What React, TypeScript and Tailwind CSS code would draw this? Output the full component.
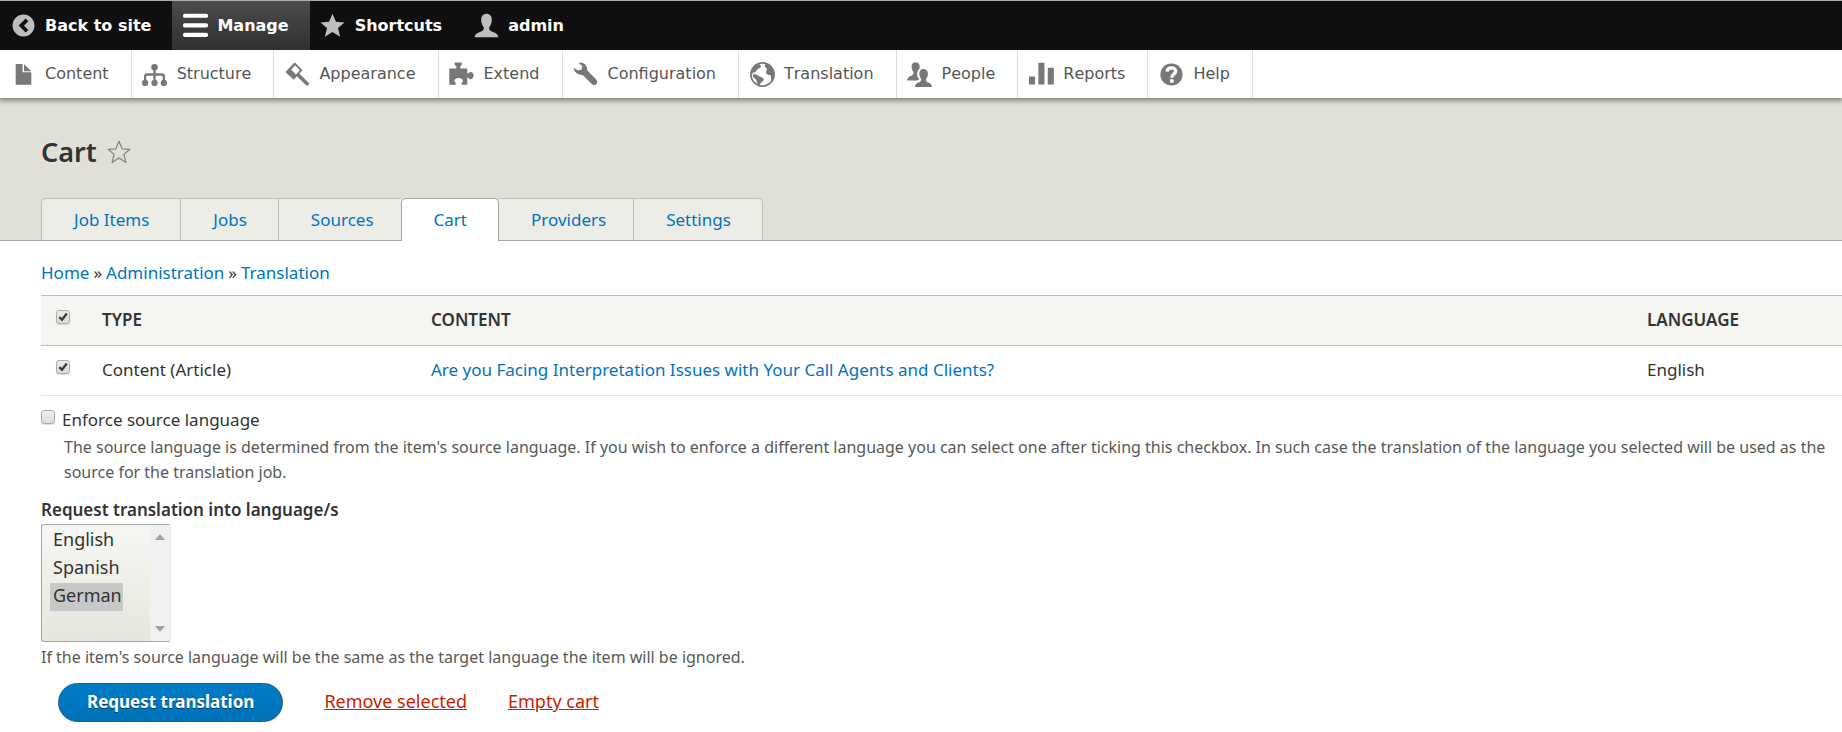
import { useEffect, useRef, useState } from "react";
import type { ReactNode } from "react";
import { clsx } from "clsx";

function Icon({ children, className }: { children: ReactNode; className?: string }) {
  return (
    <span className="flex w-[26px] shrink-0 justify-center">
      <svg viewBox="0 0 16 16" width="25" height="25" fill="currentColor" className={className} aria-hidden="true">
        {children}
      </svg>
    </span>
  );
}

const STAR = "M8 .8 10.1 5.9 15.3 6.2 11.3 9.6 12.6 15 8 12 3.4 15 4.7 9.6.7 6.2 5.9 5.9z";

const BAR = [
  {
    label: "Back to site",
    icon: <path fillRule="evenodd" d="M8 1a7 7 0 1 0 0 14A7 7 0 0 0 8 1zm1.400 2.500 1.700 1.700L8.300 8l2.800 2.800-1.700 1.700L4.900 8z" />,
  },
  {
    label: "Manage",
    active: true,
    icon: (
      <>
        <rect y="0.4" width="16" height="2.7" rx="1.1" />
        <rect y="6.5" width="16" height="2.7" rx="1.1" />
        <rect y="12.6" width="16" height="2.7" rx="1.1" />
      </>
    ),
  },
  {
    label: "Shortcuts",
    icon: <path d="M8 .4 10.200 5.600 15.700 6 11.500 9.600 12.900 15.200 8 12.200 3.100 15.200 4.500 9.600.3 6 5.800 5.600z" />,
  },
  {
    label: "admin",
    icon: (
      <path d="M8 .5C6 .5 4.600 2 4.600 4.300c0 2 .7 3.400 1.500 4.600.5 1 .1 2-.9 2.600C3.500 12.400.7 12.600.500 15.500h15c-.2-2.900-3-3.100-4.700-4-1-.6-1.400-1.600-.9-2.600.8-1.200 1.500-2.600 1.500-4.600C11.400 2 10 .5 8 .5z" />
    ),
  },
];

const TRAY = [
  { label: "Content", icon: <path d="M3 1.300h4.400v5.300H13v8H3zM8.300 1.300 13 5.900H8.300z" /> },
  {
    label: "Structure",
    icon: (
      <>
        <circle cx="8" cy="3.300" r="2.100" />
        <path d="M8 4v9M2 13.500V9.400Q2 8 3.400 8h9.200Q14 8 14 9.400v4.100" fill="none" stroke="currentColor" strokeWidth="1.500" />
        <circle cx="2" cy="13.400" r="2" />
        <circle cx="8" cy="13.400" r="2" />
        <circle cx="14" cy="13.400" r="2" />
      </>
    ),
  },
  {
    label: "Appearance",
    icon: (
      <>
        <path fillRule="evenodd" d="M6.200.200 11.200 5.200 5.600 11.400.300 6.400zM6.400 2.100 4 4.900 7 8 9.500 5.200z" />
        <path d="M8.700 8.600 14.200 13.900" stroke="currentColor" strokeWidth="2.300" strokeLinecap="round" />
      </>
    ),
  },
  {
    label: "Extend",
    icon: (
      <path d="M3.600.300h4.600v1.400l-1 1v1.400h4.500v3.400l1.100-.7c1.500-1 3 .2 3 1.900s-1.500 2.900-3 1.900l-1.100-.8v4.700H8.100v-1.300l.9-.9c0-1.300-1-2.100-2.800-2.100s-2.900.8-2.900 2.100l1 .9v1.300H.200V4.100h4.500V2.700L3.600 1.700z" />
    ),
  },
  {
    label: "Configuration",
    icon: (
      <path d="M3.500.600C5.900-.1 8.400 1.200 8.900 3.600c.2.900.2 1.600.6 2.200l5.200 5.200c1 1 1.100 2.300.3 3.100s-2.200.8-3.200-.2L6.700 8.800c-.6-.5-1.300-.4-2.200-.6C2.300 7.700.3 5.900.500 3.600l2.700 1.900 2.300-.7.500-2.200z" />
    ),
  },
  {
    label: "Translation",
    icon: (
      <>
        <circle cx="8" cy="8" r="7.400" fill="none" stroke="currentColor" strokeWidth="1.100" />
        <path d="M5.800 1.300C3.200 2 1.200 4.300.900 7.300l1.200.6 2 .1 1.400.9 2.600 1.200.8.900-.8 1.400-1.300 1-.8 1.800c-1-.9-1.800-2.100-1.900-3.700L2 9.600 1.600 6.900l1.700-.4 1.500-1.900 2.200-1.200-.3-1.300zM10 .900l-.7 1.900 1.600 1.500-.8 2.500 1.300 1.300 1.900.3.300 3.900c2-1.900 2.300-4.400 1.700-6.700C14.600 3 12.300 1.200 10 .900z" />
      </>
    ),
  },
  {
    label: "People",
    icon: (
      <>
        <path d="M5.500.200C4 .2 2.900 1.200 2.900 2.900c0 1.500.4 2.300 1 3.200.4.800.3 1.700-.4 2.200C2.300 9.200.300 9.300.100 11.900h6.300l1.700-1c-1-.5-1.600-1.600-1.600-2.900 0-1.900.5-3 1.500-3.700.600-2.300-.6-4.100-2.500-4.100z" />
        <path d="M10.600 4.400c-1.600 0-2.800 1.200-2.800 3 0 1.400.6 2.400 1.100 3.200.4.800.2 1.600-.6 2-1.300.7-3 .8-3.200 3.400H16c-.2-2.600-2.200-2.700-3.300-3.400-.7-.4-.8-1.200-.4-2 .6-.8 1.100-1.800 1.100-3.200 0-1.800-1.200-3-2.800-3z" />
      </>
    ),
  },
  {
    label: "Reports",
    icon: (
      <>
        <rect x="0" y="9.200" width="3.900" height="5.200" rx=".4" />
        <rect x="6" y="0.400" width="3.900" height="14" rx=".4" />
        <rect x="12" y="3.700" width="3.900" height="10.700" rx=".4" />
      </>
    ),
  },
  {
    label: "Help",
    icon: (
      <>
        <circle cx="8" cy="8" r="7.100" />
        <path d="M5.200 6.200C5.300 4.500 6.500 3.700 8 3.700s2.700.8 2.700 2.200c0 1.700-2.500 1.900-2.500 4.100" fill="none" stroke="#fff" strokeWidth="2.100" />
        <rect x="7" y="11" width="2.400" height="2.200" rx=".5" fill="#fff" />
      </>
    ),
  },
];

const TABS = ["Job Items", "Jobs", "Sources", "Cart", "Providers", "Settings"];
const CRUMBS = ["Home", "Administration", "Translation"];
const LANGUAGES = ["English", "Spanish", "German"];

function Checkbox({ id, label, checked, onChange }: { id: string; label?: string; checked: boolean; onChange: () => void }) {
  return (
    <span className="grid size-[14px] shrink-0">
      <input
        id={id}
        type="checkbox"
        aria-label={label}
        checked={checked}
        onChange={onChange}
        className="col-start-1 row-start-1 size-[14px] appearance-none rounded-[3px] border border-[#adadad] bg-linear-to-b from-[#ededed] to-[#dcdcdc] shadow-[0_1px_1px_rgba(0,0,0,0.12)]"
      />
      {checked && (
        <svg viewBox="0 0 14 14" className="pointer-events-none col-start-1 row-start-1 size-[14px]" aria-hidden="true">
          <path d="M3.300 7.200 6 9.800 10.800 3.600" fill="none" stroke="#3c3c3c" strokeWidth="2.400" />
        </svg>
      )}
    </span>
  );
}

export default function App() {
  const [row, setRow] = useState(true);
  const [enforce, setEnforce] = useState(false);
  const [langs, setLangs] = useState(["German"]);
  const select = useRef<HTMLSelectElement>(null);

  useEffect(() => {
    if (select.current) select.current.scrollTop = 0;
  }, []);

  return (
    <div className="min-h-screen overflow-x-hidden bg-white font-['Noto_Sans',sans-serif] text-[17px] text-[#333]">
      {/* Toolbar */}
      <nav className="relative border-t border-[#a9adab] font-['DejaVu_Sans',sans-serif] text-base shadow-[0_2px_5px_1px_rgba(0,0,0,0.4)] [font-kerning:none]">
        <div className="flex h-[49px] bg-[#0f0f0f] font-bold text-white">
          {BAR.map(({ label, icon, active }) => (
            <a key={label} href="#" className={clsx("flex items-center gap-[9px] pr-[21px] pl-[10px]", active && "bg-linear-to-b from-[#4c4c4c] to-[#303030]")}>
              <Icon className={active ? "text-white" : "text-[#bebebe]"}>{icon}</Icon>
              {label}
            </a>
          ))}
        </div>
        <div className="flex h-[48px] bg-white text-[#565656]">
          {TRAY.map(({ label, icon }) => (
            <a key={label} href="#" className="flex items-center gap-[9px] border-r border-[#ddd] pr-[22px] pl-[10px]">
              <Icon className="text-[#787878]">{icon}</Icon>
              {label}
            </a>
          ))}
        </div>
      </nav>

      <header className="flex flex-col bg-[#e0e0d8] pt-[36px]">
        <div className="flex h-[36px] items-center gap-[10px] pl-[41px]">
          <h1 className="text-[27px] leading-[36px] font-semibold">Cart</h1>
          <button type="button" aria-label="Add to shortcuts">
            <svg viewBox="0 0 16 16" width="24" height="24" fill="none" stroke="#84847a" strokeWidth=".8" strokeLinejoin="round">
              <path d={STAR} />
            </svg>
          </button>
        </div>
        <div className="mt-[28px] flex border-b border-[#a6a6a6] pl-[41px]">
          {TABS.map((tab) => (
            <a
              key={tab}
              href="#"
              className={clsx(
                "-mb-px flex h-[43px] items-center border-t border-[#a6a6a6] pl-[32px] text-[#0074bd]",
                tab === "Cart" ? "rounded-t-[5px] border-x bg-white" : "border-b border-t-[#bfbfba] bg-[#edede8]",
                tab === "Sources" || tab === "Providers" ? "pr-[27px]" : "pr-[31px]",
                tab === "Job Items" && "rounded-tl-[5px] border-l border-l-[#bfbfba]",
                tab === "Settings" && "rounded-tr-[5px] border-r border-r-[#bfbfba]",
                (tab === "Jobs" || tab === "Sources" || tab === "Settings") && "border-l border-l-[#bfbfba]",
              )}
            >
              {tab}
            </a>
          ))}
        </div>
      </header>

      <main className="pl-[41px]">
        <nav aria-label="Breadcrumb" className="flex gap-[4px] pt-[20px] leading-[24px]">
          {CRUMBS.map((crumb, i) => (
            <span key={crumb} className="flex gap-[4px]">
              {i > 0 && <span>»</span>}
              <a href="#" className="text-[#0074bd]">{crumb}</a>
            </span>
          ))}
        </nav>

        <table className="mt-[10px] w-full table-fixed border-collapse text-left">
          <thead>
            <tr className="h-[50px] border-y border-[#bfbfba] bg-[#f5f5f2]">
              <th className="w-[49px] pb-[8px] pl-[15px]">
                <Checkbox id="all" label="Select all rows" checked={row} onChange={() => setRow(!row)} />
              </th>
              <th className="w-[329px] pb-[2px] pl-[12px] font-semibold">TYPE</th>
              <th className="pb-[2px] pl-[12px] font-semibold">CONTENT</th>
              <th className="w-[207px] pb-[2px] pl-[12px] font-semibold">LANGUAGE</th>
            </tr>
          </thead>
          <tbody>
            <tr className="h-[50px] border-b border-[#e6e4df]">
              <td className="pb-[8px] pl-[15px]">
                <Checkbox id="row-1" label="Select this row" checked={row} onChange={() => setRow(!row)} />
              </td>
              <td className="pb-[2px] pl-[12px]">Content (Article)</td>
              <td className="pb-[2px] pl-[12px]">
                <a href="#" className="text-[#0074bd]">Are you Facing Interpretation Issues with Your Call Agents and Clients?</a>
              </td>
              <td className="pb-[2px] pl-[12px]">English</td>
            </tr>
          </tbody>
        </table>

        <div className="mt-[12px] flex h-[27px] gap-[7px] pt-[2px]">
          <Checkbox id="enforce" checked={enforce} onChange={() => setEnforce(!enforce)} />
          <label htmlFor="enforce" className="leading-[20px]">Enforce source language</label>
        </div>
        <p className="pl-[23px] text-base leading-[25px] text-[#595959]">
          The source language is determined from the item's source language. If you wish to enforce a different language you can select one after ticking this checkbox. In such case the translation of the language you selected will be used as the source for the translation job.
        </p>

        <label htmlFor="languages" className="mt-[13px] block leading-[24px] font-semibold">Request translation into language/s</label>
        <div className="mt-[2px] flex h-[118px] w-[130px] overflow-hidden rounded-[3px] border border-[#a6a6a6] border-r-[#ededed] bg-linear-to-b from-[#f6f6f3] to-[#e7e7df]">
          <select
            id="languages"
            ref={select}
            multiple
            value={langs}
            onChange={(e) => setLangs(Array.from(e.target.selectedOptions, (o) => o.value))}
            className="min-w-0 flex-1 appearance-none overflow-hidden bg-transparent py-[2px] pl-[8px] text-[18px] outline-none"
          >
            {LANGUAGES.map((lang) => (
              <option key={lang} value={lang} className="block h-[28px] w-fit pr-px pl-[3px] leading-[28px] text-[#333] checked:bg-[#c8c8c8] checked:bg-linear-to-b checked:from-[#c8c8c8] checked:to-[#c8c8c8]">
                {lang}
              </option>
            ))}
          </select>
          <div className="flex w-[20px] flex-col items-center justify-between bg-[#f1f1f1] py-[9px]" aria-hidden="true">
            <svg width="10" height="6" fill="#a3a3a3"><path d="M0 6 5 0l5 6z" /></svg>
            <svg width="10" height="6" fill="#a3a3a3"><path d="M0 0h10L5 6z" /></svg>
          </div>
        </div>
        <p className="mt-[3px] text-base leading-[25px] text-[#595959]">
          If the item's source language will be the same as the target language the item will be ignored.
        </p>

        <div className="mt-[13px] flex items-center gap-[41px] pb-[10px] pl-[17px] text-[18px]">
          <button type="button" className="h-[39px] rounded-full border border-[#1e5c90] bg-linear-to-b from-[#007bc6] to-[#0071b8] px-[28px] pb-[2px] text-[17px] font-bold text-white [text-shadow:0_1px_rgba(0,0,0,0.5)]">
            Request translation
          </button>
          <a href="#" className="pb-[2px] text-[#c72100] underline">Remove selected</a>
          <a href="#" className="pb-[2px] text-[#c72100] underline">Empty cart</a>
        </div>
      </main>
    </div>
  );
}
